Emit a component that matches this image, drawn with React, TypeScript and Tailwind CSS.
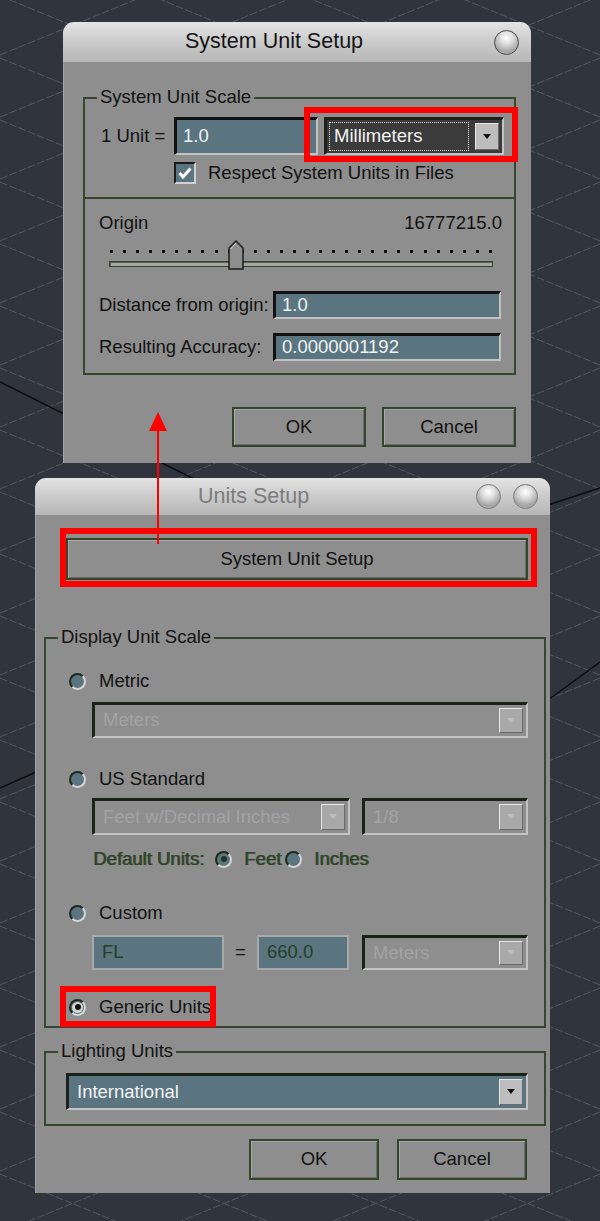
import React from 'react';

const FONT = { fontFamily: '"Liberation Sans", Arial, sans-serif' };

const GridBackdrop: React.FC = () => {
    const rows = Array.from({ length: 30 }, (_, i) => -500 + i * 62);
    return (
        <svg className="absolute inset-0" width={600} height={1221} viewBox="0 0 600 1221">
            {rows.map((y) => (
                <g key={y} stroke="#555a62" strokeWidth={1} strokeDasharray="8 2">
                    <line x1={0} y1={y} x2={600} y2={y + 245} />
                    <line x1={0} y1={y + 245} x2={600} y2={y} />
                </g>
            ))}
            <g stroke="#0c0d10" strokeWidth={1.5}>
                <line x1={0} y1={382} x2={230} y2={497} />
                <line x1={548} y1={700} x2={600} y2={662} />
                <line x1={0} y1={788} x2={36} y2={772} />
                <line x1={548} y1={505} x2={600} y2={488} />
            </g>
        </svg>
    );
};

const Orb: React.FC<{ dark?: boolean }> = ({ dark }) => (
    <div
        className={`w-[25px] h-[25px] rounded-full border bg-[radial-gradient(circle_at_50%_30%,#ffffff_0%,#e0e0e0_30%,#a4a4a4_70%,#c4c4c4_100%)] ${dark ? 'border-[#4a4a4a]' : 'border-[#7a7a7a]'}`}
    />
);

const TitleBar: React.FC<{ title: string; height: string; inactive?: boolean; children?: React.ReactNode; titleClass: string }> = ({ title, height, inactive, children, titleClass }) => (
    <div className={`${height} rounded-t-[11px] bg-[linear-gradient(to_bottom,#e4e4e4,#cdcdcd_45%,#b6b6b6)] flex items-center relative`}>
        <span className={`${titleClass} ${inactive ? 'text-[#7c7c7c]' : 'text-[#151515]'}`}>{title}</span>
        <div className="ml-auto flex gap-[12px] pr-[12px]">{children}</div>
    </div>
);

const Caret: React.FC<{ faded?: boolean }> = ({ faded }) => (
    <svg width="10" height="6" viewBox="0 0 10 6">
        <polygon points="1,0 9,0 5,5" fill={faded ? '#bdbdbd' : '#111'} />
    </svg>
);

type DropVariant = 'dark' | 'teal' | 'disabled';

const Dropdown: React.FC<{ text: string; variant: DropVariant; className: string; focus?: boolean }> = ({ text, variant, className, focus }) => {
    const fill = variant === 'dark' ? 'bg-[#3b3b3b]' : variant === 'teal' ? 'bg-[#5a7580]' : 'bg-[#8e8e8e]';
    const txt = variant === 'disabled' ? 'text-[#a3a3a3]' : 'text-[#f2f4f4]';
    return (
        <div className={`${className} ${fill} flex items-stretch border-2 border-t-[3px] border-l-[3px] border-t-[#1b2218] border-l-[#1b2218] border-r-[#c4c4c4] border-b-[#c4c4c4]`}>
            <div className={`flex-1 flex items-center ${focus ? 'm-[2px] border border-dotted border-[#e8e8e8] pl-[4px]' : 'pl-[8px]'}`}>
                <span className={`${txt} text-[18.5px] leading-none`}>{text}</span>
            </div>
            <div className={`w-[24px] my-[3px] mr-[3px] ml-[4px] flex items-center justify-center ${variant === 'disabled' ? 'bg-[#a9a9a9]' : 'bg-[#bdbdbd]'} border border-t-[#e6e6e6] border-l-[#e6e6e6] border-r-[#6a6a6a] border-b-[#6a6a6a]`}>
                <Caret faded={variant === 'disabled'} />
            </div>
        </div>
    );
};

const Field: React.FC<{ text: string; className: string; muted?: boolean }> = ({ text, className, muted }) => (
    <div
        className={`${className} bg-[#5a7580] flex items-center ${muted ? 'border-2 border-[#a9a9a9] pl-[8px]' : 'border-2 border-t-[3px] border-l-[3px] border-t-[#111] border-l-[#111] border-r-[#c2c2c2] border-b-[#c2c2c2] pl-[6px]'}`}
    >
        <span className={`text-[18.5px] leading-none ${muted ? 'text-[#273f26]' : 'text-[#eef2f3]'}`}>{text}</span>
    </div>
);

const Radio: React.FC<{ checked?: boolean; dim?: boolean }> = ({ checked, dim }) => (
    <div className="w-[17px] h-[17px] rounded-full border-2 border-t-[#1e2a1c] border-l-[#1e2a1c] border-r-[#d6d6d6] border-b-[#d6d6d6] bg-[#5a7580] flex items-center justify-center shrink-0">
        {checked && (
            <div className={`w-[11px] h-[11px] rounded-full flex items-center justify-center ${dim ? 'bg-[#5a7580]' : 'bg-[#d4d4d4]'}`}>
                <div className={`w-[6px] h-[6px] rounded-full ${dim ? 'bg-[#22361f]' : 'bg-[#111]'}`} />
            </div>
        )}
    </div>
);

const Button: React.FC<{ label: string; className: string }> = ({ label, className }) => (
    <div className={`${className} border-2 border-[#34452c] shadow-[inset_1px_1px_0_#a8a8a8,inset_-1px_-1px_0_#6e6e6e] flex items-center justify-center`}>
        <span className="text-[18.5px] leading-none text-[#121212]">{label}</span>
    </div>
);

const Legend: React.FC<{ text: string }> = ({ text }) => (
    <span className="absolute left-[12px] -top-[13px] px-[3px] bg-[#8e8e8e] text-[18.5px] leading-[22px] text-[#121212]">{text}</span>
);

const RedFrame: React.FC<{ className: string }> = ({ className }) => (
    <div className={`absolute ${className} border-[6px] border-[#ff0000] pointer-events-none`} />
);

const SystemUnitSetup: React.FC = () => (
    <div className="ml-[63px] w-[468px]">
        <TitleBar title="System Unit Setup" height="h-[40px]" titleClass="absolute left-[122px] text-[21.5px] leading-none">
            <Orb dark />
        </TitleBar>
        <div className="bg-[#8e8e8e] pt-[35px] pb-[16px] border-l border-[#a3a3a3]">
            <div className="relative ml-[19px] w-[433px] border-2 border-[#36472e]">
                <Legend text="System Unit Scale" />
                <div className="pt-[18px] pb-[13px]">
                    <div className="flex items-center h-[38px] pl-[16px]">
                        <span className="w-[73px] text-[18.5px] leading-none text-[#121212]">1 Unit =</span>
                        <Field text="1.0" className="w-[144px] h-[38px]" />
                        <div className="relative ml-[6px]">
                            <Dropdown text="Millimeters" variant="dark" focus className="w-[180px] h-[38px]" />
                            <RedFrame className="-left-[20px] -right-[14px] -top-[10px] -bottom-[7px]" />
                        </div>
                    </div>
                    <div className="flex items-center h-[22px] mt-[7px] pl-[89px]">
                        <div className="w-[22px] h-[22px] bg-[#5a7580] border-2 border-t-[#1a1a1a] border-l-[#1a1a1a] border-r-[#d0d0d0] border-b-[#d0d0d0] flex items-center justify-center">
                            <svg width="14" height="12" viewBox="0 0 14 12">
                                <polyline points="1.5,6 5,10 12.5,1.5" fill="none" stroke="#ffffff" strokeWidth="3" />
                            </svg>
                        </div>
                        <span className="ml-[12px] text-[18.5px] leading-none text-[#121212]">Respect System Units in Files</span>
                    </div>
                </div>
                <div className="border-t-2 border-[#36472e] pt-[13px] pb-[12px]">
                    <div className="flex items-center justify-between h-[22px] pl-[14px] pr-[12px]">
                        <span className="text-[18.5px] leading-none text-[#121212]">Origin</span>
                        <span className="text-[18.5px] leading-none text-[#121212]">16777215.0</span>
                    </div>
                    <div className="relative mt-[6px] h-[30px] ml-[24px] mr-[21px]">
                        <div className="flex justify-between pt-[10px] px-[1px]">
                            {Array.from({ length: 30 }, (_, i) => (
                                <div key={i} className="w-[3px] h-[3px] bg-[#111]" />
                            ))}
                        </div>
                        <div className="mt-[8px] h-[6px] border border-[#36472e] bg-[#a6a6a6] shadow-[inset_1px_1px_0_#5b5b5b]" />
                        <svg className="absolute left-[119px] top-0" width="16" height="30" viewBox="0 0 16 30">
                            <polygon points="8,1 15,8 15,29 1,29 1,8" fill="#8e8e8e" stroke="#1d1d1d" strokeWidth="1.5" />
                            <line x1="2.5" y1="9" x2="8" y2="3" stroke="#cfcfcf" strokeWidth="1" />
                        </svg>
                    </div>
                    <div className="flex items-center mt-[21px] h-[28px] pl-[14px]">
                        <span className="w-[174px] text-[18.5px] leading-none text-[#121212]">Distance from origin:</span>
                        <Field text="1.0" className="w-[228px] h-[28px]" />
                    </div>
                    <div className="flex items-center mt-[14px] h-[28px] pl-[14px]">
                        <span className="w-[174px] text-[18.5px] leading-none text-[#121212]">Resulting Accuracy:</span>
                        <Field text="0.0000001192" className="w-[228px] h-[28px]" />
                    </div>
                </div>
            </div>
            <div className="flex justify-end gap-[16px] pr-[15px] mt-[32px]">
                <Button label="OK" className="w-[134px] h-[40px]" />
                <Button label="Cancel" className="w-[134px] h-[40px]" />
            </div>
        </div>
    </div>
);

const UnitsSetup: React.FC = () => (
    <div className="ml-[35px] w-[515px] mt-[15px]">
        <TitleBar title="Units Setup" height="h-[37px]" inactive titleClass="absolute left-[163px] text-[21.5px] leading-none">
            <Orb />
            <Orb />
        </TitleBar>
        <div className="bg-[#8e8e8e] pt-[23px] pb-[13px] border-l border-[#a3a3a3]">
            <div className="relative ml-[30px] w-[462px]">
                <Button label="System Unit Setup" className="w-[462px] h-[42px]" />
                <RedFrame className="-left-[6px] -right-[9px] -top-[10px] -bottom-[7px]" />
            </div>

            <div className="relative ml-[8px] w-[502px] mt-[57px] border-2 border-[#36472e] pt-[30px] pb-[7px]">
                <Legend text="Display Unit Scale" />
                <div className="flex items-center h-[24px] pl-[23px]">
                    <Radio />
                    <span className="ml-[13px] text-[18.5px] leading-none text-[#121212]">Metric</span>
                </div>
                <div className="pl-[46px] mt-[9px]">
                    <Dropdown text="Meters" variant="disabled" className="w-[436px] h-[36px]" />
                </div>

                <div className="flex items-center h-[24px] pl-[23px] mt-[29px]">
                    <Radio />
                    <span className="ml-[13px] text-[18.5px] leading-none text-[#121212]">US Standard</span>
                </div>
                <div className="flex gap-[12px] pl-[46px] mt-[7px]">
                    <Dropdown text="Feet w/Decimal Inches" variant="disabled" className="w-[258px] h-[37px]" />
                    <Dropdown text="1/8" variant="disabled" className="w-[166px] h-[37px]" />
                </div>
                <div className="flex items-center h-[22px] pl-[47px] mt-[13px] text-[18.5px] leading-none text-[#2f4329] [text-shadow:1px_0_0_#3f5238]">
                    <span>Default Units:</span>
                    <div className="ml-[11px]"><Radio checked dim /></div>
                    <span className="ml-[12px]">Feet</span>
                    <div className="ml-[4px]"><Radio /></div>
                    <span className="ml-[12px]">Inches</span>
                </div>

                <div className="flex items-center h-[24px] pl-[23px] mt-[31px]">
                    <Radio />
                    <span className="ml-[13px] text-[18.5px] leading-none text-[#121212]">Custom</span>
                </div>
                <div className="flex items-center pl-[46px] mt-[10px] h-[35px]">
                    <Field text="FL" muted className="w-[132px] h-[35px]" />
                    <span className="w-[33px] text-center text-[18.5px] leading-none text-[#121212]">=</span>
                    <Field text="660.0" muted className="w-[92px] h-[35px]" />
                    <Dropdown text="Meters" variant="disabled" className="ml-[13px] w-[166px] h-[35px]" />
                </div>

                <div className="relative flex items-center h-[24px] pl-[23px] mt-[25px]">
                    <Radio checked />
                    <span className="ml-[13px] text-[18.5px] leading-none text-[#121212]">Generic Units</span>
                    <RedFrame className="left-[14px] -top-[9px] w-[156px] h-[41px]" />
                </div>
            </div>

            <div className="relative ml-[8px] w-[502px] mt-[23px] border-2 border-[#36472e] pt-[20px] pb-[14px]">
                <Legend text="Lighting Units" />
                <div className="pl-[20px]">
                    <Dropdown text="International" variant="teal" className="w-[462px] h-[37px]" />
                </div>
            </div>

            <div className="flex justify-end gap-[18px] pr-[23px] mt-[13px]">
                <Button label="OK" className="w-[130px] h-[41px]" />
                <Button label="Cancel" className="w-[130px] h-[41px]" />
            </div>
        </div>
    </div>
);

const Arrow: React.FC = () => (
    <svg className="absolute left-[147px] top-[411px]" width="22" height="134" viewBox="0 0 22 134">
        <polygon points="11,1 20,20 2,20" fill="#ff0000" />
        <line x1="11" y1="18" x2="11" y2="133" stroke="#ff0000" strokeWidth="2" />
    </svg>
);

export default function App() {
    return (
        <div className="relative w-[600px] h-[1221px] overflow-hidden bg-[#30353d]" style={FONT}>
            <GridBackdrop />
            <div className="relative pt-[22px]">
                <SystemUnitSetup />
                <UnitsSetup />
            </div>
            <Arrow />
        </div>
    );
}
